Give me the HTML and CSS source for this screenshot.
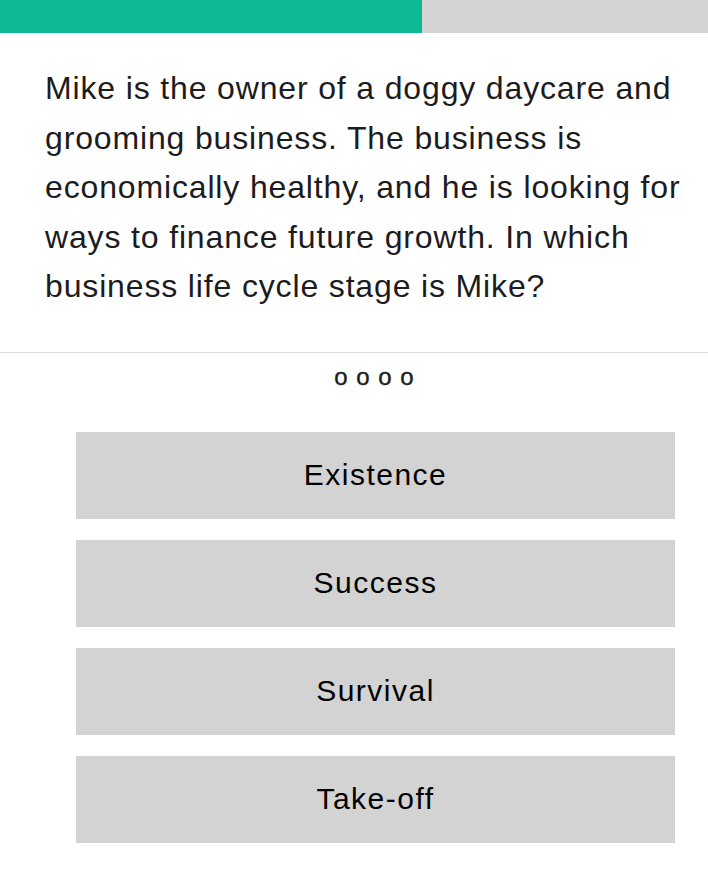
FILE: index.html
```html
<!DOCTYPE html>
<html lang="en">

<head>
    <meta charset="UTF-8">
    <meta name="viewport" content="width=device-width, initial-scale=1.0">
    <title>Quiz</title>
    <link rel="stylesheet" href="styles.css">
</head>

<body>
    <div class="progress">
        <div class="progress-fill" style="width: 59.6%"></div>
    </div>

    <p class="question">Mike is the owner of a doggy daycare and grooming business. The business is economically healthy, and he is looking for ways to finance future growth. In which business life cycle stage is Mike?</p>

    <hr class="divider">

    <div class="quiz-body">
        <div class="dots">o o o o</div>

        <div class="answers">
            <button class="answer">Existence</button>
            <button class="answer">Success</button>
            <button class="answer">Survival</button>
            <button class="answer">Take-off</button>
        </div>
    </div>
</body>

</html>
```

FILE: styles.css
```css
body {
    margin: 0;
    font-family: "Liberation Sans", Arial, sans-serif;
    background: white;
    color: #1c1c1e;
}

.progress {
    height: 33px;
    background: #d3d3d3;
}

.progress-fill {
    height: 100%;
    background: #0cb994;
}

.question {
    margin: 31px 0 0;
    padding: 0 20px 0 45px;
    font-size: 32px;
    line-height: 49.5px;
    letter-spacing: 0.85px;
}

.divider {
    margin: 40px 0 0;
    border: none;
    border-top: 1.5px solid #dcdcdc;
}

.quiz-body {
    margin: 0 33px 0 76px;
}

/* page indicator */
.dots {
    margin-top: 8px;
    text-align: center;
    font-size: 24px;
    line-height: 32px;
    letter-spacing: 1px;
    padding-right: 2px;
    -webkit-text-stroke: 0.4px #1c1c1e;
}

.answers {
    display: flex;
    flex-direction: column;
    gap: 21px;
    margin-top: 39px;
}

.answer {
    height: 87px;
    border: none;
    background: #d3d3d3;
    color: black;
    font-family: inherit;
    font-size: 30px;
    letter-spacing: 1.5px;
    padding: 0;
}
```
